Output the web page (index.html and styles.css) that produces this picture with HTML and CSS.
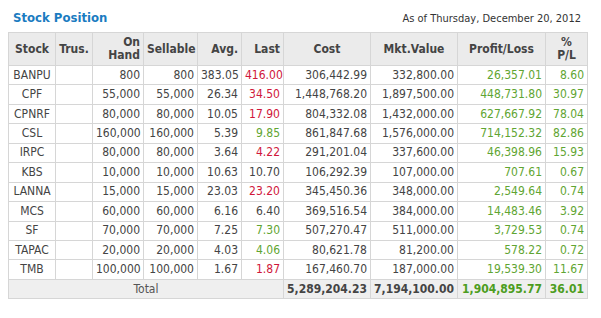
FILE: index.html
```html
<!DOCTYPE html>
<html>
<head>
<meta charset="utf-8">
<link rel="stylesheet" href="styles.css">
</head>
<body>
<div class="panel">
  <div class="head">
    <h1 class="title">Stock Position</h1>
    <div class="asof">As of Thursday, December 20, 2012</div>
  </div>
  <table class="grid">
    <colgroup>
      <col style="width:47px"><col style="width:37px"><col style="width:51px"><col style="width:54px"><col style="width:44px"><col style="width:42px"><col style="width:87px"><col style="width:87px"><col style="width:88px"><col style="width:42px">
    </colgroup>
    <thead>
      <tr>
        <th class="c">Stock</th>
        <th class="c">Trus.</th>
        <th class="r">On<br>Hand</th>
        <th class="r">Sellable</th>
        <th class="r">Avg.</th>
        <th class="r">Last</th>
        <th class="c">Cost</th>
        <th class="c">Mkt.Value</th>
        <th class="c">Profit/Loss</th>
        <th class="c">%<br>P/L</th>
      </tr>
    </thead>
    <tbody>
      <tr><td class="c">BANPU</td><td></td><td>800</td><td>800</td><td>383.05</td><td class="down">416.00</td><td>306,442.99</td><td>332,800.00</td><td class="up">26,357.01</td><td class="up">8.60</td></tr>
      <tr><td class="c">CPF</td><td></td><td>55,000</td><td>55,000</td><td>26.34</td><td class="down">34.50</td><td>1,448,768.20</td><td>1,897,500.00</td><td class="up">448,731.80</td><td class="up">30.97</td></tr>
      <tr><td class="c">CPNRF</td><td></td><td>80,000</td><td>80,000</td><td>10.05</td><td class="down">17.90</td><td>804,332.08</td><td>1,432,000.00</td><td class="up">627,667.92</td><td class="up">78.04</td></tr>
      <tr><td class="c">CSL</td><td></td><td>160,000</td><td>160,000</td><td>5.39</td><td class="up">9.85</td><td>861,847.68</td><td>1,576,000.00</td><td class="up">714,152.32</td><td class="up">82.86</td></tr>
      <tr><td class="c">IRPC</td><td></td><td>80,000</td><td>80,000</td><td>3.64</td><td class="down">4.22</td><td>291,201.04</td><td>337,600.00</td><td class="up">46,398.96</td><td class="up">15.93</td></tr>
      <tr><td class="c">KBS</td><td></td><td>10,000</td><td>10,000</td><td>10.63</td><td>10.70</td><td>106,292.39</td><td>107,000.00</td><td class="up">707.61</td><td class="up">0.67</td></tr>
      <tr><td class="c">LANNA</td><td></td><td>15,000</td><td>15,000</td><td>23.03</td><td class="down">23.20</td><td>345,450.36</td><td>348,000.00</td><td class="up">2,549.64</td><td class="up">0.74</td></tr>
      <tr><td class="c">MCS</td><td></td><td>60,000</td><td>60,000</td><td>6.16</td><td>6.40</td><td>369,516.54</td><td>384,000.00</td><td class="up">14,483.46</td><td class="up">3.92</td></tr>
      <tr><td class="c">SF</td><td></td><td>70,000</td><td>70,000</td><td>7.25</td><td class="up">7.30</td><td>507,270.47</td><td>511,000.00</td><td class="up">3,729.53</td><td class="up">0.74</td></tr>
      <tr><td class="c">TAPAC</td><td></td><td>20,000</td><td>20,000</td><td>4.03</td><td class="up">4.06</td><td>80,621.78</td><td>81,200.00</td><td class="up">578.22</td><td class="up">0.72</td></tr>
      <tr><td class="c">TMB</td><td></td><td>100,000</td><td>100,000</td><td>1.67</td><td class="down">1.87</td><td>167,460.70</td><td>187,000.00</td><td class="up">19,539.30</td><td class="up">11.67</td></tr>
    </tbody>
    <tfoot>
      <tr><td class="c label" colspan="6">Total</td><td class="b">5,289,204.23</td><td class="b">7,194,100.00</td><td class="b upb">1,904,895.77</td><td class="b upb">36.01</td></tr>
    </tfoot>
  </table>
</div>
</body>
</html>
```

FILE: styles.css
```css
html, body {
  margin: 0;
  padding: 0;
  background: #ffffff;
}
body {
  font-family: "DejaVu Sans Condensed", "Liberation Sans", sans-serif;
  font-size: 12px;
  color: #444;
}
.panel {
  padding: 8px 14px 0 8px;
}
.head {
  display: flex;
  justify-content: space-between;
  align-items: baseline;
  padding: 0 6px 0 5px;
  height: 24px;
}
.title {
  margin: 0;
  font-size: 13px;
  font-weight: bold;
  color: #1b7cc1;
  line-height: 20px;
}
.asof {
  font-size: 11px;
  color: #333;
}
.grid {
  border-collapse: collapse;
  table-layout: fixed;
  width: 579px;
}
.grid th, .grid td {
  border: 1px solid #d6d6d6;
  padding: 0 3px 0 3px;
  text-align: right;
  white-space: nowrap;
  overflow: hidden;
}
.grid th {
  background: #ebebeb;
  font-weight: bold;
  color: #444;
  height: 32px;
  line-height: 13px;
  font-size: 12px;
}
.grid td {
  height: 18.45px;
  line-height: 15px;
}
.grid .c { text-align: center; }
.grid .r { text-align: right; }
.down { color: #d0173a; }
.up { color: #5fa532; }
tfoot td {
  background: #efefef;
}
tfoot .b { font-weight: bold; color: #444; }
tfoot .upb { color: #4c9d20; }
tfoot .label { color: #555; }
```
